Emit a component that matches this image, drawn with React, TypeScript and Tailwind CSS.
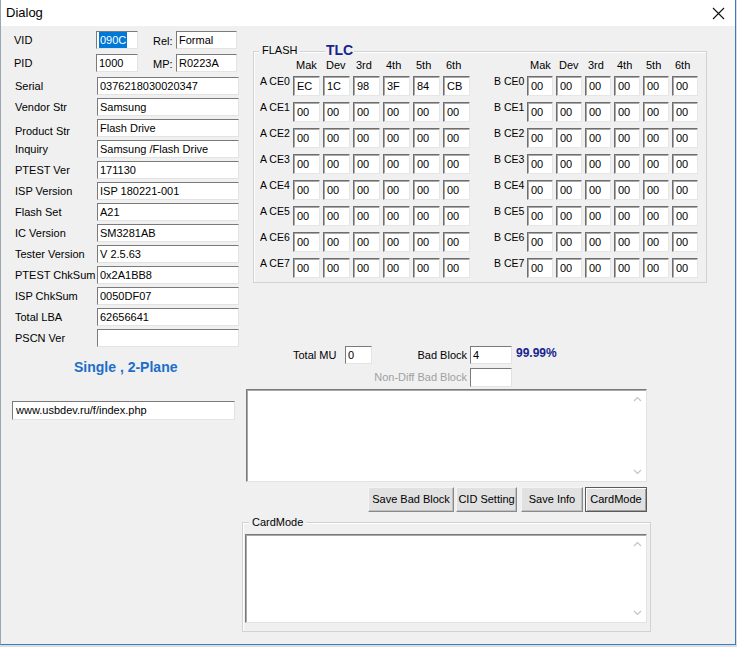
import React from "react";

const fieldBase =
  "flex items-center bg-white border border-t-[#7a7a7a] border-l-[#7a7a7a] border-b-[#e3e3e3] border-r-[#e3e3e3] pl-[2px] text-[11px] text-black whitespace-nowrap overflow-hidden";

const cellBase =
  "flex items-center bg-white border border-t-[#6e6e6e] border-l-[#6e6e6e] border-b-[#e6e6e6] border-r-[#e6e6e6] shadow-[inset_1px_1px_0_#a8a8a8] pl-[3px] text-[11px] text-black h-[20px]";

const leftRows: [string, string][] = [
  ["Serial", "0376218030020347"],
  ["Vendor Str", "Samsung"],
  ["Product Str", "Flash Drive"],
  ["Inquiry", "Samsung /Flash Drive"],
  ["PTEST Ver", "171130"],
  ["ISP Version", "ISP 180221-001"],
  ["Flash Set", "A21"],
  ["IC Version", "SM3281AB"],
  ["Tester Version", "V 2.5.63"],
  ["PTEST ChkSum", "0x2A1BB8"],
  ["ISP ChkSum", "0050DF07"],
  ["Total LBA", "62656641"],
  ["PSCN Ver", ""],
];

const headers = ["Mak", "Dev", "3rd", "4th", "5th", "6th"];
const ce0 = ["EC", "1C", "98", "3F", "84", "CB"];

function Half({ side, cellW, gap }: { side: "A" | "B"; cellW: string; gap: string }) {
  return (
    <div className="flex flex-col">
      <div className="flex h-[14px] items-center">
        <div className="w-[33px]" />
        <div className={`flex ${gap}`}>
          {headers.map((h) => (
            <div key={h} className={`${cellW} pl-[3px] text-[11px] leading-[14px]`}>
              {h}
            </div>
          ))}
        </div>
      </div>
      <div className="mt-[4px] flex flex-col gap-[6px]">
        {Array.from({ length: 8 }).map((_, r) => (
          <div key={r} className="flex h-[20px]">
            <div className="w-[33px] text-[10.5px] leading-[13px] -mt-[1px] whitespace-nowrap">
              {side} CE{r}
            </div>
            <div className={`flex ${gap}`}>
              {headers.map((h, c) => (
                <div key={h} className={`${cellBase} ${cellW}`}>
                  {side === "A" && r === 0 ? ce0[c] : "00"}
                </div>
              ))}
            </div>
          </div>
        ))}
      </div>
    </div>
  );
}

function ScrollArrows() {
  return (
    <div className="absolute right-[4px] top-[6px] bottom-[6px] flex flex-col justify-between">
      <svg width="9" height="6" viewBox="0 0 9 6">
        <path d="M1 5 L4.5 1.5 L8 5" fill="none" stroke="#c4c4c4" strokeWidth="1.2" />
      </svg>
      <svg width="9" height="6" viewBox="0 0 9 6">
        <path d="M1 1 L4.5 4.5 L8 1" fill="none" stroke="#c4c4c4" strokeWidth="1.2" />
      </svg>
    </div>
  );
}

function Btn({ label, w, strong }: { label: string; w: string; strong?: boolean }) {
  return (
    <div
      className={`${w} h-[25px] flex items-center justify-center bg-[#e1e1e1] text-[11px] text-black border ${
        strong
          ? "border-[#5a5a5a] shadow-[inset_1px_1px_0_#fff,inset_-1px_-1px_0_#a0a0a0]"
          : "border-t-[#f4f4f4] border-l-[#f4f4f4] border-b-[#8a8a8a] border-r-[#8a8a8a] shadow-[inset_-1px_-1px_0_#c0c0c0]"
      }`}
    >
      {label}
    </div>
  );
}

export default function App() {
  return (
    <div className="w-[737px] h-[647px] bg-[#dcdcdc] font-['Liberation_Sans',Arial,sans-serif] text-black overflow-hidden">
      <div className="w-[736px] h-[645px] bg-[#f0f0f0] border-l border-r border-b border-l-[#9aa6b2] border-r-[#3a7cc0] border-b-[#3a7cc0] flex flex-col">
        {/* Title bar */}
        <div className="h-[26px] bg-white flex items-center justify-between pl-[5px] pr-[10px] shrink-0">
          <span className="text-[13px]">Dialog</span>
          <svg width="13" height="13" viewBox="0 0 13 13">
            <path d="M1 1 L12 12 M12 1 L1 12" stroke="#111" strokeWidth="1.1" />
          </svg>
        </div>

        <div className="flex">
          {/* Left column */}
          <div className="w-[241px] flex flex-col pt-[5px]">
            <div className="flex flex-col gap-[3px]">
              <div className="flex items-center h-[18px] pl-[13px] mb-[2px]">
                <div className="w-[82px] text-[11px]">VID</div>
                <div className={`${fieldBase} w-[42px] h-[18px]`}>
                  <span className="bg-[#0078d7] text-white px-[1px]">090C</span>
                </div>
                <div className="w-[38px] pl-[15px] text-[11px] pt-[3px]">Rel:</div>
                <div className={`${fieldBase} w-[61px] h-[18px]`}>Formal</div>
              </div>
              <div className="flex items-center h-[18px] pl-[13px] mb-[2px]">
                <div className="w-[82px] text-[11px]">PID</div>
                <div className={`${fieldBase} w-[42px] h-[18px]`}>1000</div>
                <div className="w-[38px] pl-[15px] text-[11px] pt-[3px]">MP:</div>
                <div className={`${fieldBase} w-[61px] h-[18px]`}>R0223A</div>
              </div>
              {leftRows.map(([l, v]) => (
                <div key={l} className="flex items-center h-[18px] pl-[14px]">
                  <div className={`w-[82px] text-[11px] whitespace-nowrap ${l === "Product Str" ? "pt-[6px]" : ""}`}>{l}</div>
                  <div className={`${fieldBase} w-[142px] h-[18px]`}>{v}</div>
                </div>
              ))}
            </div>
            <div className="mt-[11px] ml-[73px] text-[14px] leading-[18px] font-bold text-[#1c6ec8] whitespace-nowrap">
              Single , 2-Plane
            </div>
            <div className={`${fieldBase} mt-[25px] ml-[11px] w-[223px] h-[19px] pl-[3px]`}>
              www.usbdev.ru/f/index.php
            </div>
          </div>

          {/* Right column */}
          <div className="flex flex-col">
            {/* FLASH group */}
            <div className="relative mt-[25px] ml-[11px] w-[454px] h-[232px] border border-[#d2d2d2] shadow-[inset_1px_1px_0_#fff] pt-[6px] pl-[6px]">
              <span className="absolute -top-[9px] left-[5px] px-[3px] bg-[#f0f0f0] text-[11px] leading-[14px]">FLASH</span>
              <span className="absolute -top-[10px] left-[71px] px-[1px] bg-[#f0f0f0] text-[14px] leading-[17px] font-bold text-[#16248f]">TLC</span>
              <div className="flex gap-[24px]">
                <Half side="A" cellW="w-[27px]" gap="gap-[3px]" />
                <Half side="B" cellW="w-[26px]" gap="gap-[3px]" />
              </div>
            </div>

            {/* Totals */}
            <div className="mt-[63px] flex items-center h-[18px] ml-[51px]">
              <div className="w-[52px] text-[11px]">Total MU</div>
              <div className={`${fieldBase} w-[27px] h-[18px] bg-[#f0f0f0]`}>0</div>
              <div className="w-[98px] text-right pr-[3px] text-[11px]">Bad Block</div>
              <div className={`${fieldBase} w-[42px] h-[18px]`}>4</div>
              <div className="ml-[4px] self-start -mt-[2px] text-[12px] font-bold text-[#16248f]">99.99%</div>
            </div>
            <div className="mt-[4px] flex items-center h-[19px] ml-[128px]">
              <div className="w-[100px] text-right pr-[3px] text-[11px] text-[#a0a0a0] whitespace-nowrap">Non-Diff Bad Block</div>
              <div className={`${fieldBase} w-[42px] h-[19px] bg-[#f0f0f0]`}></div>
            </div>

            {/* Log textarea */}
            <div className="relative mt-[2px] ml-[4px] w-[401px] h-[93px] bg-white border border-t-[#7a7a7a] border-l-[#7a7a7a] border-b-[#e3e3e3] border-r-[#e3e3e3] shadow-[inset_1px_1px_0_#a8a8a8]">
              <ScrollArrows />
            </div>

            {/* Buttons */}
            <div className="mt-[5px] ml-[126px] flex">
              <Btn label="Save Bad Block" w="w-[86px]" />
              <div className="w-[2px]" />
              <Btn label="CID Setting" w="w-[61px]" />
              <div className="w-[4px]" />
              <Btn label="Save Info" w="w-[62px]" />
              <div className="w-[2px]" />
              <Btn label="CardMode" w="w-[62px]" strong />
            </div>

            {/* CardMode group */}
            <div className="relative mt-[10px] w-[409px] h-[110px] border border-[#d2d2d2] shadow-[inset_1px_1px_0_#fff] pt-[11px] pl-[2px]">
              <span className="absolute -top-[8px] left-[6px] px-[3px] bg-[#f0f0f0] text-[11px] leading-[14px]">CardMode</span>
              <div className="relative w-[402px] h-[89px] bg-white border border-t-[#7a7a7a] border-l-[#7a7a7a] border-b-[#e3e3e3] border-r-[#e3e3e3] shadow-[inset_1px_1px_0_#a8a8a8]">
                <ScrollArrows />
              </div>
            </div>
          </div>
        </div>
      </div>
    </div>
  );
}
